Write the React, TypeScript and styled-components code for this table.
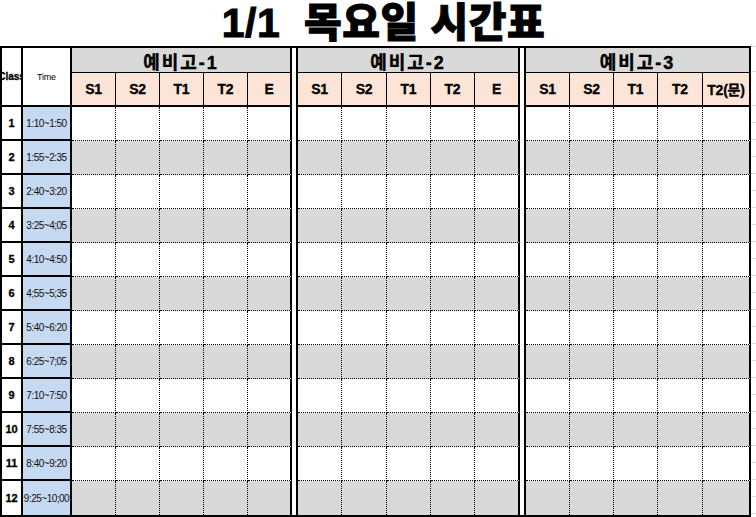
import React, { ReactElement } from "react";
import styled, { createGlobalStyle } from "styled-components";

const GlobalStyle = createGlobalStyle`
  html, body {
    margin: 0;
    padding: 0;
    background: #ffffff;
  }

  body {
    font-family: "Liberation Sans", "Noto Sans CJK KR", sans-serif;
    color: #000000;
  }
`;

interface Group {
  name: string;
  subs: string[];
  widths: number[];
}

const GROUPS: Group[] = [
  { name: "예비고-1", subs: ["S1", "S2", "T1", "T2", "E"], widths: [44, 44, 44, 44, 44] },
  { name: "예비고-2", subs: ["S1", "S2", "T1", "T2", "E"], widths: [44, 45, 44, 44, 45] },
  { name: "예비고-3", subs: ["S1", "S2", "T1", "T2", "T2(문)"], widths: [44, 44, 44, 45, 48] },
];

const TIMES = [
  "1:10~1:50",
  "1:55~2:35",
  "2:40~3:20",
  "3:25~4;05",
  "4:10~4:50",
  "4;55~5;35",
  "5:40~6:20",
  "6:25~7;05",
  "7:10~7:50",
  "7:55~8:35",
  "8:40~9:20",
  "9:25~10;00",
];

const columns = [
  "21px",
  "49px",
  ...GROUPS.flatMap((g, i) => [
    ...g.widths.map((w) => `${w}px`),
    ...(i < GROUPS.length - 1 ? ["6px"] : []),
  ]),
].join(" ");

const Page = styled.main`
  display: flex;
  flex-direction: column;
  width: 756px;
  height: 517px;
  overflow: hidden;
`;

const Title = styled.h1`
  display: flex;
  align-items: center;
  justify-content: center;
  height: 46px;
  margin: 0;
  padding-left: 16px;
  width: 751px;
  box-sizing: border-box;
  font-family: "Liberation Sans", "Noto Sans CJK KR", sans-serif;
  font-size: 41px;
  font-weight: 900;
  line-height: 1;
  white-space: pre;
  letter-spacing: 0.5px;
  -webkit-text-stroke: 1px #000;
`;

const Body = styled.div`
  display: flex;
`;

const Sheet = styled.section`
  display: grid;
  grid-template-columns: ${columns};
  grid-template-rows: 25px 34px repeat(12, 34px);
  border-top: 2px solid #000;
  border-left: 2px solid #000;
  border-bottom: 2px solid #000;
`;

const Cell = styled.div`
  box-sizing: border-box;
  display: flex;
  align-items: center;
  justify-content: center;
  overflow: hidden;
  white-space: nowrap;
`;

const CornerHead = styled(Cell)`
  grid-row: span 2;
  border-right: 2px solid #000;
  border-bottom: 2px solid #000;
  font-size: 10px;
  font-weight: 700;
  -webkit-text-stroke: 0.3px #000;
`;

const TimeHead = styled(Cell)`
  grid-row: span 2;
  border-right: 2px solid #000;
  border-bottom: 2px solid #000;
  font-size: 9px;
  letter-spacing: -0.2px;
`;

const GroupHead = styled(Cell)`
  grid-column: span 5;
  background: #d9d9d9;
  border-right: 2px solid #000;
  border-bottom: 1px solid #000;
  font-size: 18px;
  font-weight: 700;
  letter-spacing: 2px;
  padding-top: 1px;
  -webkit-text-stroke: 0.4px #000;
`;

const Gap = styled.div`
  grid-row: span 14;
  border-right: 2px solid #000;
  background: #ffffff;
`;

const SubHead = styled(Cell)<{ $last?: boolean }>`
  background: #fce4d6;
  border-right: ${(p) => (p.$last ? "2px solid #000" : "1px solid #000")};
  border-bottom: 2px solid #000;
  font-size: 14px;
  font-weight: 700;
  letter-spacing: -0.2px;
  -webkit-text-stroke: 0.3px #000;
`;

const Period = styled(Cell)<{ $end?: boolean }>`
  border-right: 2px solid #000;
  border-bottom: ${(p) => (p.$end ? "none" : "2px solid #000")};
  font-size: 11px;
  font-weight: 700;
  -webkit-text-stroke: 0.3px #000;
`;

const Time = styled(Cell)<{ $end?: boolean }>`
  background: #c5d9f1;
  border-right: 2px solid #000;
  border-bottom: ${(p) => (p.$end ? "none" : "2px solid #000")};
  font-size: 10px;
  letter-spacing: -0.5px;
  color: #111111;
`;

const Slot = styled(Cell)<{ $last?: boolean; $shade?: boolean; $end?: boolean }>`
  background: ${(p) => (p.$shade ? "#d9d9d9" : "#ffffff")};
  border-right: ${(p) => (p.$last ? "2px solid #000" : "1px dotted #000")};
  border-bottom: ${(p) => (p.$end ? "none" : "1px dotted #000")};
`;

const Filler = styled.div`
  flex: 1;
  display: flex;
  flex-direction: column;
  border-top: 1px solid #dadada;
`;

const FillerLine = styled.div<{ $h: number }>`
  box-sizing: border-box;
  height: ${(p) => p.$h}px;
  border-bottom: 1px solid #dadada;
`;

export default function App(): ReactElement {
  const fillerHeights = [25, 34, ...Array.from({ length: 24 }, () => 17)];

  return (
    <Page>
      <GlobalStyle />
      <Title>{"1/1  목요일 시간표"}</Title>

      <Body>
        <Sheet>
          <CornerHead>Class</CornerHead>
          <TimeHead>Time</TimeHead>
          {GROUPS.map((g, i) => (
            <React.Fragment key={g.name}>
              <GroupHead>{g.name}</GroupHead>
              {i < GROUPS.length - 1 && <Gap />}
            </React.Fragment>
          ))}

          {GROUPS.map((g) =>
            g.subs.map((s, j) => (
              <SubHead key={`${g.name}-${j}`} $last={j === g.subs.length - 1}>
                {s}
              </SubHead>
            ))
          )}

          {TIMES.map((t, r) => {
            const end = r === TIMES.length - 1;
            const shade = r % 2 === 1;
            return (
              <React.Fragment key={t}>
                <Period $end={end}>{r + 1}</Period>
                <Time $end={end}>{t}</Time>
                {GROUPS.map((g) =>
                  g.subs.map((_, j) => (
                    <Slot
                      key={`${g.name}-${r}-${j}`}
                      $last={j === g.subs.length - 1}
                      $shade={shade}
                      $end={end}
                    />
                  ))
                )}
              </React.Fragment>
            );
          })}
        </Sheet>

        <Filler>
          {fillerHeights.map((h, i) => (
            <FillerLine key={i} $h={h} />
          ))}
        </Filler>
      </Body>
    </Page>
  );
}
